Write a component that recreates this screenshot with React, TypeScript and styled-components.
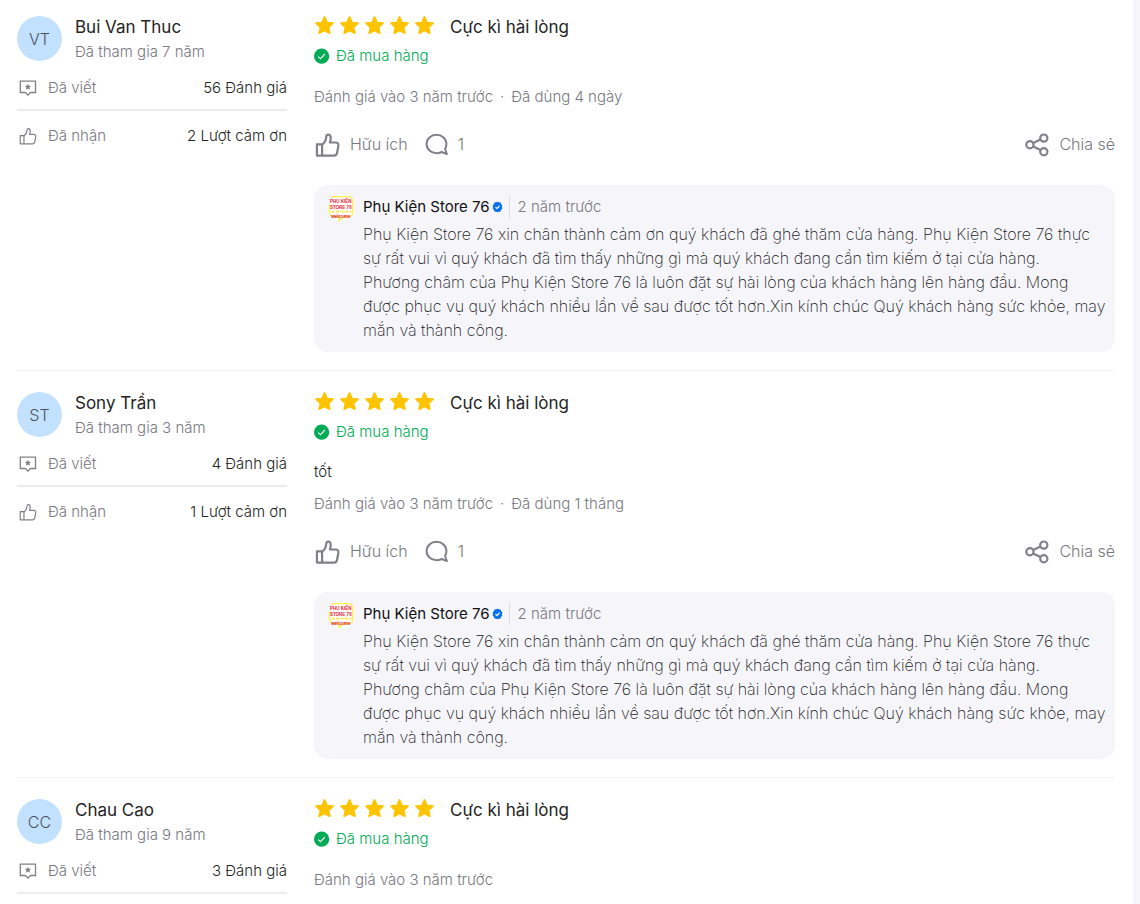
import React from 'react';
import styled, { createGlobalStyle } from 'styled-components';

const GlobalStyle = createGlobalStyle`
  *, *::before, *::after { box-sizing: border-box; }
  body {
    margin: 0;
    background: #f5f5fa;
    color: #242424;
    font-family: Inter, "Liberation Sans", sans-serif;
    font-size: 15px;
    font-weight: 300;
    line-height: 24px;
  }
  h3, p { margin: 0; padding: 0; }
  svg { flex: none; }
`;

const Sheet = styled.main`
  min-height: 100vh;
  margin-right: 7px;
  padding: 0 18px 0 17px;
  background: #fff;
`;

const Review = styled.article`
  display: grid;
  grid-template-columns: 270px minmax(0, 1fr);
  column-gap: 27px;
  padding: 15px 0 18px;

  & + & {
    padding-top: 20px;
    border-top: 1px solid #f2f2f2;
  }
`;

const Profile = styled.header`
  display: flex;
  gap: 13px;
  margin-bottom: 12px;
`;

const Avatar = styled.span`
  display: flex;
  align-items: center;
  justify-content: center;
  width: 45px;
  height: 45px;
  margin-top: 1px;
  border-radius: 50%;
  background: #c2e1ff;
  color: #4a525c;
  font-size: 16px;
`;

const Name = styled.h3`
  font-size: 17px;
  font-weight: 400;
`;

const Joined = styled.p`
  margin-top: 1px;
  color: #787881;
`;

const Stat = styled.div`
  display: flex;
  align-items: center;
  gap: 10px;
  color: #787881;

  & + & {
    margin-top: 9px;
    padding-top: 13px;
    border-top: 2px solid #ebebf0;
  }
`;

const StatEnd = styled.div`
  margin-top: 9px;
  border-top: 2px solid #ebebf0;
`;

const StatValue = styled.span`
  margin-left: auto;
  color: #242424;
`;

const Heading = styled.div`
  display: flex;
  align-items: center;
  gap: 15px;
`;

const Stars = styled.span`
  display: flex;
  gap: 4px;
  padding-bottom: 3px;
`;

const Title = styled.h3`
  font-size: 17px;
  font-weight: 400;
`;

const Purchased = styled.p`
  display: flex;
  align-items: center;
  gap: 6px;
  margin: 5px 0 17px;
  color: #00ab56;
`;

const Comment = styled.p`
  margin: -1px 0 8px;
`;

const DateLine = styled.p`
  display: flex;
  gap: 7px;
  color: #787881;
`;

const Actions = styled.div`
  display: flex;
  align-items: center;
  gap: 16px;
  height: 24px;
  margin: 23px 0 29px;
`;

const Action = styled.button<{ $end?: boolean }>`
  display: flex;
  align-items: center;
  gap: 9px;
  margin-left: ${({ $end }) => ($end ? 'auto' : '0')};
  padding: 0;
  border: 0;
  background: none;
  color: #787881;
  font: inherit;
  font-size: 16px;
  cursor: pointer;
`;

const Reply = styled.section`
  display: grid;
  grid-template-columns: 27px minmax(0, 1fr);
  column-gap: 8px;
  padding: 10px 7px 10px 14px;
  border-radius: 14px;
  background: #f5f5fa;
`;

const ReplyHead = styled.div`
  display: flex;
  align-items: center;
  height: 24px;
  margin-bottom: 3px;
`;

const StoreName = styled.span`
  margin-right: 2px;
  font-weight: 400;
  color: #111;
`;

const ReplyTime = styled.time`
  margin-left: 6px;
  padding-left: 8px;
  border-left: 1px solid #dddde3;
  color: #787881;
  line-height: 22px;
`;

const ReplyText = styled.p`
  color: #1a1a1a;
  font-size: 16px;
  font-weight: 200;
  white-space: pre-line;
`;

const StarIcon = () => (
  <svg width="21" height="21" viewBox="1 1 22 22" fill="#ffc400" stroke="#ffc400" strokeWidth="1.800" strokeLinejoin="round" aria-hidden="true">
    <path d="M12 3l2.700 5.900 6.200.7-4.600 4.300 1.300 6.200L12 17.100l-5.600 3 1.300-6.200L3.100 9.600l6.200-.7z" />
  </svg>
);

const CheckIcon = () => (
  <svg width="16" height="16" viewBox="0 0 16 16" aria-hidden="true">
    <circle cx="7.600" cy="8.200" r="7.600" fill="#00ab56" />
    <path d="M4.300 8.600l2.200 2.100 4.500-4.700" fill="none" stroke="#fff" strokeWidth="1.100" />
  </svg>
);

const VerifiedIcon = () => (
  <svg width="11" height="12" viewBox="0 0 11 12" aria-hidden="true">
    <path d="M5.500.8l1.500.5 1.500.3.600 1.500 1.200 1.300-.3 1.600.3 1.600-1.200 1.300-.6 1.500-1.500.3-1.500.5-1.500-.5-1.500-.3-.6-1.500L.7 7.600 1 6 .7 4.400l1.200-1.300.6-1.500L4 1.300z" fill="#0a73e8" />
    <path d="M3.500 6.200L5 7.500l2.600-2.700" fill="none" stroke="#fff" strokeWidth="1.200" />
  </svg>
);

const WrittenIcon = () => (
  <svg width="21" height="20" viewBox="0 0 21 20" fill="none" stroke="#808089" strokeWidth="1.300" aria-hidden="true">
    <path d="M3.300 3.100h15.200v11.400h-4.900L10.900 17l-2.700-2.500H3.300z" />
    <path d="M10.900 6.200l.9 1.700 1.800.2-1.300 1.300.3 1.900-1.700-.9-1.700.9.300-1.900-1.300-1.300 1.800-.2z" fill="#808089" strokeWidth=".4" />
  </svg>
);

const ThumbIcon = ({ size, stroke, viewBox }: { size: number; stroke: number; viewBox: string }) => (
  <svg width={size} height={size} viewBox={viewBox} fill="none" stroke="#808089" strokeWidth={stroke} strokeLinejoin="round" aria-hidden="true">
    <path d="M1.800 11.300h5v10.900h-5z" />
    <path d="M6.800 11.500c2.700-1.500 3.700-4 4-7.300.1-1.400.8-2.200 1.900-2.200 1.600 0 2.400 1.400 2.400 3.400 0 1.500-.3 2.700-.8 4.200h5.800c1.600 0 2.600 1.200 2.400 2.800l-1.300 7.300c-.3 1.600-1.200 2.500-2.800 2.500H6.800" />
  </svg>
);

const BubbleIcon = () => (
  <svg width="25" height="25" viewBox="0 0 25 25" fill="none" stroke="#808089" strokeWidth="2" strokeLinejoin="round" aria-hidden="true">
    <path d="M12.500 2.700C7 2.700 2.600 6.800 2.600 12s4.400 9.300 9.900 9.300c1.900 0 3.600-.5 5.100-1.300l5.300 2-1.800-5c.9-1.500 1.300-3.200 1.300-5 0-5.200-4.400-9.300-9.900-9.300z" />
  </svg>
);

const ShareIcon = () => (
  <svg width="25" height="25" viewBox="0 0 25 25" fill="none" stroke="#808089" strokeWidth="2.200" aria-hidden="true">
    <circle cx="4.900" cy="12.800" r="3.600" />
    <circle cx="18.800" cy="6.100" r="3.600" />
    <circle cx="18.800" cy="19.700" r="3.600" />
    <path d="M8.200 11.100l7.300-3.500M8.200 14.400l7.300 3.600" />
  </svg>
);

const StoreLogo = () => (
  <svg width="27" height="27" viewBox="0 0 27 27" role="img" aria-label="Phụ Kiện Store 76">
    <circle cx="13.500" cy="13.500" r="13" fill="#fff" />
    <path d="M4 3.500Q4 1.600 6 1.600h15q3 0 3.600 4V17q0 4-3 4.500h-5l-5.500 4 .5-4H5.500Q1.600 21 1.600 16V9" fill="none" stroke="#fff04a" strokeWidth="1.300" />
    <g fill="#e82031" fontFamily="Liberation Sans, sans-serif" fontWeight="700" fontSize="4.500" textAnchor="middle">
      <text x="12.800" y="7.800">PHỤ KIỆN</text>
      <text x="12.800" y="14">STORE 76</text>
      <text x="12.800" y="22.800">welcome</text>
    </g>
    <path d="M3.500 16.700h20" stroke="#ffe83b" strokeWidth="1.800" strokeDasharray="3 1.500" />
  </svg>
);

const REPLY =
  'Phụ Kiện Store 76 xin chân thành cảm ơn quý khách đã ghé thăm cửa hàng. Phụ Kiện Store 76 thực sự rất vui vì quý khách đã tìm thấy những gì mà quý khách đang cần tìm kiếm ở tại cửa hàng.\nPhương châm của Phụ Kiện Store 76 là luôn đặt sự hài lòng của khách hàng lên hàng đầu. Mong được phục vụ quý khách nhiều lần về sau được tốt hơn.Xin kính chúc Quý khách hàng sức khỏe, may mắn và thành công.';

type ReviewData = {
  initials: string;
  name: string;
  joined: string;
  written: string;
  thanks?: string;
  comment?: string;
  date: string;
  used?: string;
  comments?: number;
  reply?: string;
};

const REVIEWS: ReviewData[] = [
  {
    initials: 'VT',
    name: 'Bui Van Thuc',
    joined: 'Đã tham gia 7 năm',
    written: '56 Đánh giá',
    thanks: '2 Lượt cảm ơn',
    date: 'Đánh giá vào 3 năm trước',
    used: 'Đã dùng 4 ngày',
    comments: 1,
    reply: REPLY,
  },
  {
    initials: 'ST',
    name: 'Sony Trần',
    joined: 'Đã tham gia 3 năm',
    written: '4 Đánh giá',
    thanks: '1 Lượt cảm ơn',
    comment: 'tốt',
    date: 'Đánh giá vào 3 năm trước',
    used: 'Đã dùng 1 tháng',
    comments: 1,
    reply: REPLY,
  },
  {
    initials: 'CC',
    name: 'Chau Cao',
    joined: 'Đã tham gia 9 năm',
    written: '3 Đánh giá',
    date: 'Đánh giá vào 3 năm trước',
  },
];

const ReviewItem = ({ review }: { review: ReviewData }) => (
  <Review>
    <aside>
      <Profile>
        <Avatar>{review.initials}</Avatar>
        <div>
          <Name>{review.name}</Name>
          <Joined>{review.joined}</Joined>
        </div>
      </Profile>
      <Stat>
        <WrittenIcon />
        <span>Đã viết</span>
        <StatValue>{review.written}</StatValue>
      </Stat>
      {review.thanks ? (
        <Stat>
          <ThumbIcon size={21} stroke={1.6} viewBox="-2.5 -1.500 28 28" />
          <span>Đã nhận</span>
          <StatValue>{review.thanks}</StatValue>
        </Stat>
      ) : (
        <StatEnd />
      )}
    </aside>
    <div>
      <Heading>
        <Stars role="img" aria-label="5/5">
          {[1, 2, 3, 4, 5].map((n) => (
            <StarIcon key={n} />
          ))}
        </Stars>
        <Title>Cực kì hài lòng</Title>
      </Heading>
      <Purchased>
        <CheckIcon />
        Đã mua hàng
      </Purchased>
      {review.comment && <Comment>{review.comment}</Comment>}
      <DateLine>
        <span>{review.date}</span>
        {review.used && (
          <>
            <span>·</span>
            <span>{review.used}</span>
          </>
        )}
      </DateLine>
      {review.reply && (
        <>
          <Actions>
            <Action type="button">
              <ThumbIcon size={27} stroke={2.1} viewBox="-1 -1.500 26 26" />
              Hữu ích
            </Action>
            <Action type="button">
              <BubbleIcon />
              {review.comments}
            </Action>
            <Action type="button" $end>
              <ShareIcon />
              Chia sẻ
            </Action>
          </Actions>
          <Reply>
            <StoreLogo />
            <div>
              <ReplyHead>
                <StoreName>Phụ Kiện Store 76</StoreName>
                <VerifiedIcon />
                <ReplyTime>2 năm trước</ReplyTime>
              </ReplyHead>
              <ReplyText>{review.reply}</ReplyText>
            </div>
          </Reply>
        </>
      )}
    </div>
  </Review>
);

export default function App() {
  return (
    <>
      <GlobalStyle />
      <Sheet>
        {REVIEWS.map((review) => (
          <ReviewItem key={review.name} review={review} />
        ))}
      </Sheet>
    </>
  );
}
